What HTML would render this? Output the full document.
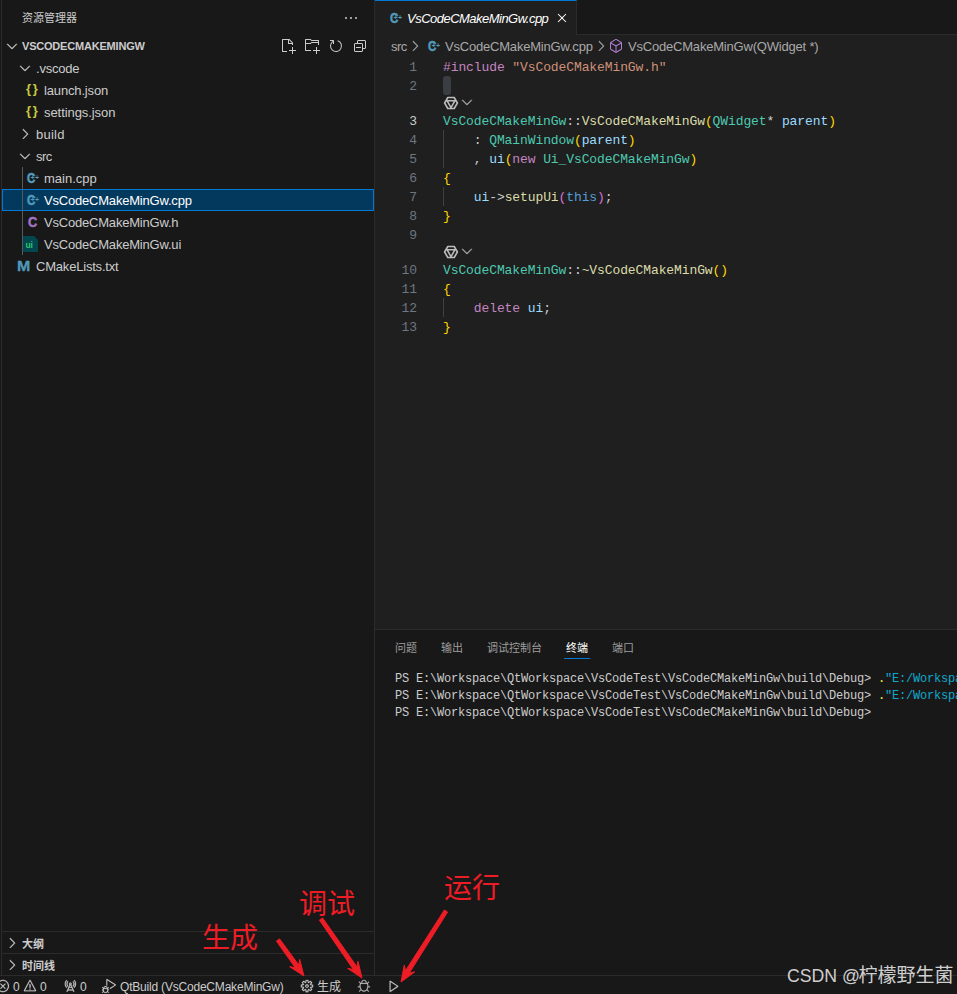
<!DOCTYPE html>
<html lang="zh-CN">
<head>
<meta charset="utf-8">
<title>VsCodeCMakeMinGw.cpp - VsCodeCMakeMinGw - Visual Studio Code</title>
<style>
*{box-sizing:border-box;margin:0;padding:0}
html,body{width:957px;height:994px;overflow:hidden;background:#181818}
body{position:relative;font-family:"Liberation Sans","Noto Sans CJK SC",sans-serif;font-size:13px;color:#cccccc}
.abs{position:absolute}
#sidebar{position:absolute;left:0;top:0;width:375px;height:975px;background:#181818;border-right:1px solid #2b2b2b}
#leftedge{position:absolute;left:1px;top:0;width:1px;height:975px;background:#2b2b2b}
#editor{position:absolute;left:375px;top:0;width:582px;height:629px;background:#1f1f1f}
#panel{position:absolute;left:375px;top:629px;width:582px;height:346px;background:#181818;border-top:1px solid #2b2b2b}
#status{position:absolute;left:0;top:975px;width:957px;height:19px;background:#181818;border-top:1px solid #2b2b2b}
.t{position:absolute;white-space:pre;line-height:22px;height:22px}
.ui{letter-spacing:-0.2px}
.code{position:absolute;left:443px;white-space:pre;font-family:"Liberation Mono",monospace;font-size:13px;line-height:19px;height:19px;letter-spacing:-0.1px;color:#cccccc}
.ln{position:absolute;left:375px;width:42px;text-align:right;font-family:"Liberation Mono",monospace;font-size:13px;line-height:19px;height:19px;letter-spacing:-0.1px;color:#6e7681}
.term{position:absolute;left:395px;white-space:pre;font-family:"Liberation Mono",monospace;font-size:12px;line-height:17px;height:17px;letter-spacing:-0.2px;color:#cccccc}
.k{color:#c586c0}.s{color:#ce9178}.ty{color:#4ec9b0}.fn{color:#dcdcaa}.v{color:#9cdcfe}.b1{color:#ffd700}.b2{color:#da70d6}.kw{color:#569cd6}
svg{position:absolute;overflow:visible}
.red{position:absolute;color:#ee1c25;font-family:"Liberation Sans","Noto Sans CJK SC",sans-serif;font-size:28px;line-height:30px;white-space:pre}
.fi{position:absolute;white-space:pre;font-weight:bold;line-height:22px;height:22px;text-align:center}
</style>
</head>
<body>
<div id="sidebar"></div>
<div id="leftedge"></div>
<div id="editor"></div>
<div id="panel"></div>
<div id="status"></div>

<div class="t" style="left:22px;top:7px;font-size:11px;color:#cccccc">资源管理器</div>
<svg style="left:343px;top:10px" width="16" height="16" viewBox="0 0 16 16" fill="#cccccc"><path d="M4 8a1 1 0 1 1-2 0 1 1 0 0 1 2 0zm5 0a1 1 0 1 1-2 0 1 1 0 0 1 2 0zm5 0a1 1 0 1 1-2 0 1 1 0 0 1 2 0z"/></svg>
<svg style="left:4px;top:38px" width="16" height="16" viewBox="0 0 16 16" fill="#cccccc" stroke="#cccccc" stroke-width="0.35"><path fill-rule="evenodd" d="M7.976 10.072l4.357-4.357.62.618L8.284 11h-.618L3 6.333l.619-.618 4.357 4.357z"/></svg>
<div class="t ui" style="left:22px;top:35px;font-size:11px;font-weight:bold;color:#cccccc">VSCODECMAKEMINGW</div>
<svg style="left:280px;top:38px" width="16" height="16" viewBox="0 0 16 16" fill="#cccccc"><path fill-rule="evenodd" d="M9.5 1.1l3.4 3.5.1.4v2h-1V6H8V2H3v11h4v1H2.5l-.5-.5v-12l.5-.5h6.7l.3.1zM9 2v3h2.9L9 2zm4 14h-1v-3H9v-1h3V9h1v3h3v1h-3v3z"/></svg>
<svg style="left:304px;top:38px" width="16" height="16" viewBox="0 0 16 16" fill="#cccccc"><path fill-rule="evenodd" d="M14.5 2H7.71l-.85-.85L6.51 1h-5l-.5.5v11l.5.5H7v-1H1.99V6h4.49l.35-.15.86-.86H14v1.5l-.001.51h1.011V2.5L14.5 2zm-.51 2h-6.5l-.35.15-.86.86H2v-3h4.29l.85.85.36.15H14l-.01.99zM13 16h-1v-3H9v-1h3V9h1v3h3v1h-3v3z"/></svg>
<svg style="left:328px;top:38px" width="16" height="16" viewBox="0 0 16 16" fill="#cccccc"><path fill-rule="evenodd" d="M4.681 3H2V2h3.5l.5.5V6H5V4a5 5 0 1 0 4.53-.761l.302-.954A6 6 0 1 1 4.681 3z"/></svg>
<svg style="left:352px;top:38px" width="16" height="16" viewBox="0 0 16 16" fill="#cccccc"><path d="M9 9H4v1h5V9z"/><path fill-rule="evenodd" d="M5 3l1-1h7l1 1v7l-1 1h-2v2l-1 1H3l-1-1V6l1-1h2V3zm1 2h4l1 1v4h2V3H6v2zm4 1H3v7h7V6z"/></svg>
<div class="abs" style="left:2px;top:189px;width:372px;height:22px;background:#04395e;border:1px solid #0078d4"></div>
<div class="abs" style="left:22px;top:167px;width:1px;height:88px;background:#585858"></div>
<svg style="left:17px;top:60px" width="16" height="16" viewBox="0 0 16 16" fill="#cccccc" stroke="#cccccc" stroke-width="0.35"><path fill-rule="evenodd" d="M7.976 10.072l4.357-4.357.62.618L8.284 11h-.618L3 6.333l.619-.618 4.357 4.357z"/></svg>
<div class="t" style="left:36px;top:58px;letter-spacing:-0.2px;color:#cccccc">.vscode</div>
<div class="fi" style="left:26px;top:78px;font-size:13px;letter-spacing:1.8px;color:#cbcb41">{}</div>
<div class="t" style="left:44px;top:80px;letter-spacing:-0.15px;color:#cccccc">launch.json</div>
<div class="fi" style="left:26px;top:100px;font-size:13px;letter-spacing:1.8px;color:#cbcb41">{}</div>
<div class="t" style="left:44px;top:102px;letter-spacing:-0.07px;color:#cccccc">settings.json</div>
<svg style="left:16.5px;top:126px" width="16" height="16" viewBox="0 0 16 16" fill="#cccccc" stroke="#cccccc" stroke-width="0.35"><path fill-rule="evenodd" d="M10.072 8.024L5.715 3.667l.618-.62L11 7.716v.618L6.333 13l-.618-.619 4.357-4.357z"/></svg>
<div class="t" style="left:36px;top:124px;letter-spacing:0.24px;color:#cccccc">build</div>
<svg style="left:17px;top:148px" width="16" height="16" viewBox="0 0 16 16" fill="#cccccc" stroke="#cccccc" stroke-width="0.35"><path fill-rule="evenodd" d="M7.976 10.072l4.357-4.357.62.618L8.284 11h-.618L3 6.333l.619-.618 4.357 4.357z"/></svg>
<div class="t" style="left:36px;top:146px;letter-spacing:-0.5px;color:#cccccc">src</div>
<div class="fi" style="left:27px;top:167px;width:10px;font-size:14.5px;color:#519aba;-webkit-text-stroke:0.5px #519aba;transform:scaleX(0.8);transform-origin:0 50%">C</div><div class="fi" style="left:30.4px;top:167.3px;font-size:7px;letter-spacing:0.6px;color:#519aba">++</div>
<div class="t" style="left:44px;top:168px;letter-spacing:-0.01px;color:#cccccc">main.cpp</div>
<div class="fi" style="left:27px;top:189px;width:10px;font-size:14.5px;color:#519aba;-webkit-text-stroke:0.5px #519aba;transform:scaleX(0.8);transform-origin:0 50%">C</div><div class="fi" style="left:30.4px;top:189.3px;font-size:7px;letter-spacing:0.6px;color:#519aba">++</div>
<div class="t" style="left:44px;top:190px;letter-spacing:-0.2px;color:#ffffff">VsCodeCMakeMinGw.cpp</div>
<div class="fi" style="left:27.5px;top:211px;font-size:14.5px;color:#a074c4;-webkit-text-stroke:0.5px #a074c4;transform:scaleX(0.88);transform-origin:0 50%">C</div>
<div class="t" style="left:44px;top:212px;letter-spacing:-0.2px;color:#cccccc">VsCodeCMakeMinGw.h</div>
<svg style="left:23px;top:236px" width="15" height="16" viewBox="0 0 15 16"><path d="M0 0H11L15 4V16H0Z" fill="#00474f"/></svg><div class="fi" style="left:25.4px;top:233.5px;font-size:8.5px;color:#33c46f">ui</div>
<div class="t" style="left:44px;top:234px;letter-spacing:-0.2px;color:#cccccc">VsCodeCMakeMinGw.ui</div>
<div class="fi" style="left:17.4px;top:255px;font-size:14.5px;color:#519aba;-webkit-text-stroke:0.3px #519aba;transform:scaleX(1.1);transform-origin:0 50%">M</div>
<div class="t" style="left:36px;top:256px;letter-spacing:-0.2px;color:#cccccc">CMakeLists.txt</div>
<div class="abs" style="left:2px;top:931px;width:372px;height:1px;background:#2b2b2b"></div>
<div class="abs" style="left:2px;top:953px;width:372px;height:1px;background:#2b2b2b"></div>
<svg style="left:4.4px;top:935px" width="16" height="16" viewBox="0 0 16 16" fill="#cccccc" stroke="#cccccc" stroke-width="0.35"><path fill-rule="evenodd" d="M10.072 8.024L5.715 3.667l.618-.62L11 7.716v.618L6.333 13l-.618-.619 4.357-4.357z"/></svg>
<svg style="left:4.4px;top:957px" width="16" height="16" viewBox="0 0 16 16" fill="#cccccc" stroke="#cccccc" stroke-width="0.35"><path fill-rule="evenodd" d="M10.072 8.024L5.715 3.667l.618-.62L11 7.716v.618L6.333 13l-.618-.619 4.357-4.357z"/></svg>
<div class="t" style="left:22px;top:933px;font-size:11px;font-weight:bold">大纲</div>
<div class="t" style="left:22px;top:955px;font-size:11px;font-weight:bold">时间线</div>
<div class="abs" style="left:375px;top:0;width:582px;height:35px;background:#181818;border-bottom:1px solid #2b2b2b"></div>
<div class="abs" style="left:375px;top:0;width:202px;height:35px;background:#1f1f1f;border-top:1px solid #0078d4;border-right:1px solid #2b2b2b"></div>
<div class="fi" style="left:390px;top:6.5px;width:10px;font-size:14.5px;color:#519aba;-webkit-text-stroke:0.5px #519aba;transform:scaleX(0.8);transform-origin:0 50%">C</div><div class="fi" style="left:393.4px;top:6.8px;font-size:7px;letter-spacing:0.6px;color:#519aba">++</div>
<div class="t" style="left:407px;top:8px;font-style:italic;letter-spacing:-0.52px;color:#ffffff">VsCodeCMakeMinGw.cpp</div>
<svg style="left:554px;top:10px" width="16" height="16" viewBox="0 0 16 16" fill="#ffffff"><path fill-rule="evenodd" d="M8 8.707l3.646 3.647.708-.707L8.707 8l3.647-3.646-.707-.708L8 7.293 4.354 3.646l-.707.708L7.293 8l-3.646 3.646.707.708L8 8.707z"/></svg>
<div class="t" style="left:391px;top:36px;letter-spacing:-0.5px;color:#a9a9a9">src</div>
<svg style="left:406.5px;top:38px" width="16" height="16" viewBox="0 0 16 16" fill="#a9a9a9" stroke="#a9a9a9" stroke-width="0.35"><path fill-rule="evenodd" d="M10.072 8.024L5.715 3.667l.618-.62L11 7.716v.618L6.333 13l-.618-.619 4.357-4.357z"/></svg>
<div class="fi" style="left:428px;top:35px;width:10px;font-size:14.5px;color:#519aba;-webkit-text-stroke:0.5px #519aba;transform:scaleX(0.8);transform-origin:0 50%">C</div><div class="fi" style="left:431.4px;top:35.3px;font-size:7px;letter-spacing:0.6px;color:#519aba">++</div>
<div class="t ui" style="left:445px;top:36px;color:#a9a9a9">VsCodeCMakeMinGw.cpp</div>
<svg style="left:592.8px;top:38px" width="16" height="16" viewBox="0 0 16 16" fill="#a9a9a9" stroke="#a9a9a9" stroke-width="0.35"><path fill-rule="evenodd" d="M10.072 8.024L5.715 3.667l.618-.62L11 7.716v.618L6.333 13l-.618-.619 4.357-4.357z"/></svg>
<svg style="left:608.3px;top:38px" width="16" height="16" viewBox="0 0 16 16" fill="#b180d7"><path d="M13.51 4l-5-3h-1l-5 3-.49.86v6l.49.85 5 3h1l5-3 .49-.85v-6L13.51 4zm-6 9.56l-4.5-2.7V5.7l4.5 2.45v5.41zM3.27 4.7l4.74-2.84 4.74 2.84-4.74 2.59L3.27 4.7zm9.74 6.16l-4.5 2.7V8.15l4.5-2.45v5.16z"/></svg>
<div class="t ui" style="left:628px;top:36px;color:#a9a9a9">VsCodeCMakeMinGw(QWidget *)</div>
<div class="ln" style="top:58px">1</div>
<div class="code" style="top:58px"><span class="k">#include</span> <span class="s">"VsCodeCMakeMinGw.h"</span></div>
<div class="ln" style="top:77px">2</div>
<div class="ln" style="top:112px;color:#cccccc">3</div>
<div class="code" style="top:112px"><span class="ty">VsCodeCMakeMinGw</span>::<span class="fn">VsCodeCMakeMinGw</span><span class="b1">(</span><span class="ty">QWidget</span>* <span class="v">parent</span><span class="b1">)</span></div>
<div class="ln" style="top:131px">4</div>
<div class="code" style="top:131px">    : <span class="ty">QMainWindow</span><span class="b1">(</span><span class="v">parent</span><span class="b1">)</span></div>
<div class="ln" style="top:150px">5</div>
<div class="code" style="top:150px">    , <span class="v">ui</span><span class="b1">(</span><span class="k">new</span> <span class="ty">Ui_VsCodeCMakeMinGw</span><span class="b1">)</span></div>
<div class="ln" style="top:169px">6</div>
<div class="code" style="top:169px"><span class="b1">{</span></div>
<div class="ln" style="top:188px">7</div>
<div class="code" style="top:188px">    <span class="v">ui</span>-&gt;<span class="fn">setupUi</span><span class="b2">(</span><span class="kw">this</span><span class="b2">)</span>;</div>
<div class="ln" style="top:207px">8</div>
<div class="code" style="top:207px"><span class="b1">}</span></div>
<div class="ln" style="top:226px">9</div>
<div class="ln" style="top:261px">10</div>
<div class="code" style="top:261px"><span class="ty">VsCodeCMakeMinGw</span>::<span class="fn">~VsCodeCMakeMinGw</span><span class="b1">()</span></div>
<div class="ln" style="top:280px">11</div>
<div class="code" style="top:280px"><span class="b1">{</span></div>
<div class="ln" style="top:299px">12</div>
<div class="code" style="top:299px">    <span class="k">delete</span> <span class="v">ui</span>;</div>
<div class="ln" style="top:318px">13</div>
<div class="code" style="top:318px"><span class="b1">}</span></div>
<div class="abs" style="left:443px;top:76px;width:8px;height:19px;background:#3a3d41;border-radius:3px"></div>
<div class="abs" style="left:443px;top:130px;width:1px;height:38px;background:#404040"></div>
<div class="abs" style="left:443px;top:187px;width:1px;height:19px;background:#404040"></div>
<div class="abs" style="left:443px;top:298px;width:1px;height:19px;background:#404040"></div>
<svg style="left:444.3px;top:96px" width="14" height="14" viewBox="0 0 14 14" fill="none" stroke="#bdbdbd" stroke-width="1.55" stroke-linejoin="round" stroke-linecap="round"><path d="M13.4 7.0 L10.2 12.5 L3.8 12.5 L0.6 7.0 L3.8 1.5 L10.2 1.5Z M3.0 4.7 L12.2 4.7 M11.0 4.7 L6.4 12.7 M7.0 11.6 L2.4 3.6"/></svg>
<svg style="left:458.6px;top:94px" width="16" height="16" viewBox="0 0 16 16" fill="#b0b0b0" stroke="#b0b0b0" stroke-width="0.35"><path fill-rule="evenodd" d="M7.976 10.072l4.357-4.357.62.618L8.284 11h-.618L3 6.333l.619-.618 4.357 4.357z"/></svg>
<svg style="left:444.3px;top:245px" width="14" height="14" viewBox="0 0 14 14" fill="none" stroke="#bdbdbd" stroke-width="1.55" stroke-linejoin="round" stroke-linecap="round"><path d="M13.4 7.0 L10.2 12.5 L3.8 12.5 L0.6 7.0 L3.8 1.5 L10.2 1.5Z M3.0 4.7 L12.2 4.7 M11.0 4.7 L6.4 12.7 M7.0 11.6 L2.4 3.6"/></svg>
<svg style="left:458.6px;top:243px" width="16" height="16" viewBox="0 0 16 16" fill="#b0b0b0" stroke="#b0b0b0" stroke-width="0.35"><path fill-rule="evenodd" d="M7.976 10.072l4.357-4.357.62.618L8.284 11h-.618L3 6.333l.619-.618 4.357 4.357z"/></svg>
<div class="t" style="left:395px;top:637px;font-size:11px;color:#9d9d9d">问题</div>
<div class="t" style="left:441px;top:637px;font-size:11px;color:#9d9d9d">输出</div>
<div class="t" style="left:487px;top:637px;font-size:11px;color:#9d9d9d">调试控制台</div>
<div class="t" style="left:566px;top:637px;font-size:11px;color:#ffffff">终端</div>
<div class="t" style="left:612px;top:637px;font-size:11px;color:#9d9d9d">端口</div>
<div class="abs" style="left:564px;top:658px;width:26px;height:1px;background:#0078d4"></div>
<div class="term" style="top:671px">PS E:\Workspace\QtWorkspace\VsCodeTest\VsCodeCMakeMinGw\build\Debug&gt; <span style="color:#f5f543">.</span><span style="color:#11a8cd">"E:/Workspace/QtWorkspace/VsCodeTest/VsCodeCMakeMinGw/build/Debug/VsCodeCMakeMinGw.exe"</span></div>
<div class="term" style="top:688px">PS E:\Workspace\QtWorkspace\VsCodeTest\VsCodeCMakeMinGw\build\Debug&gt; <span style="color:#f5f543">.</span><span style="color:#11a8cd">"E:/Workspace/QtWorkspace/VsCodeTest/VsCodeCMakeMinGw/build/Debug/VsCodeCMakeMinGw.exe"</span></div>
<div class="term" style="top:705px">PS E:\Workspace\QtWorkspace\VsCodeTest\VsCodeCMakeMinGw\build\Debug&gt;</div>
<svg style="left:-4px;top:978.7px" width="14" height="14" viewBox="0 0 16 16" fill="#cccccc" stroke="#cccccc" stroke-width="0.25"><path fill-rule="evenodd" d="M8.6 1c1.6.1 3.1.9 4.2 2 1.3 1.4 2 3.1 2 5.1 0 1.6-.6 3.1-1.6 4.4-1 1.2-2.4 2.1-4 2.4-1.6.3-3.2.1-4.6-.7-1.4-.8-2.5-2-3.1-3.5C.9 9.2.8 7.5 1.3 6c.5-1.6 1.4-2.9 2.8-3.8C5.4 1.3 7 .9 8.6 1zm.5 12.9c1.3-.3 2.5-1 3.4-2.1.8-1.1 1.3-2.4 1.2-3.8 0-1.6-.6-3.2-1.7-4.3-1-1-2.2-1.6-3.6-1.7-1.3-.1-2.7.2-3.8 1-1.1.8-1.9 1.9-2.3 3.3-.4 1.3-.4 2.7.2 4 .6 1.3 1.5 2.3 2.7 3 1.2.7 2.6.9 3.9.6zM7.9 7.5L10.3 5l.7.7-2.4 2.5 2.4 2.5-.7.7-2.4-2.5-2.4 2.5-.7-.7 2.4-2.5-2.4-2.5.7-.7 2.4 2.5z"/></svg>
<div class="t ui" style="left:13px;top:976px;font-size:12px">0</div>
<svg style="left:23px;top:978.7px" width="14" height="14" viewBox="0 0 16 16" fill="#cccccc" stroke="#cccccc" stroke-width="0.25"><path fill-rule="evenodd" d="M7.56 1h.88l6.54 12.26-.44.74H1.44L1 13.26 7.56 1zM8 2.28L2.28 13H13.7L8 2.28zM8.625 12v-1h-1.25v1h1.25zm-1.25-2V6h1.25v4h-1.25z"/></svg>
<div class="t ui" style="left:40px;top:976px;font-size:12px">0</div>
<svg style="left:63px;top:978.7px" width="14" height="14" viewBox="0 0 16 16" fill="#cccccc" stroke="#cccccc" stroke-width="0.25"><path fill-rule="evenodd" d="M2.998 5.58a5.55 5.55 0 0 1 1.62-3.88l-.71-.7a6.45 6.45 0 0 0 0 9.16l.71-.7a5.55 5.55 0 0 1-1.62-3.88zm1.06 0a4.42 4.42 0 0 0 1.32 3.17l.71-.71a3.27 3.27 0 0 1-.76-1.12 3.45 3.45 0 0 1 0-2.67 3.22 3.22 0 0 1 .76-1.13l-.71-.71a4.46 4.46 0 0 0-1.32 3.17zm7.65 3.21l-.71-.71c.33-.32.59-.704.76-1.13a3.449 3.449 0 0 0 0-2.67 3.22 3.22 0 0 0-.76-1.13l.71-.7a4.468 4.468 0 0 1 0 6.34zM13.068 1l-.71.71a5.43 5.43 0 0 1 0 7.74l.71.71a6.45 6.45 0 0 0 0-9.16zM9.993 5.43a1.5 1.5 0 0 1-.245.98 2 2 0 0 1-.27.23l3.44 7.73-.92.4-.77-1.73h-5.54l-.77 1.73-.92-.4 3.44-7.73a1.52 1.52 0 0 1-.33-1.63 1.55 1.55 0 0 1 .56-.68 1.5 1.5 0 0 1 2.325 1.1zm-1.595-.34a.52.52 0 0 0-.25.14.52.52 0 0 0-.11.22.48.48 0 0 0 0 .29c.04.09.102.17.18.23a.54.54 0 0 0 .28.08.51.51 0 0 0 .5-.5.54.54 0 0 0-.08-.28.58.58 0 0 0-.23-.18.48.48 0 0 0-.29 0zm.23 2.05h-.27l-.87 1.94h2l-.86-1.94zm2.2 4.94l-.89-2h-2.88l-.89 2h4.66z"/></svg>
<div class="t ui" style="left:80px;top:976px;font-size:12px">0</div>
<svg style="left:102px;top:978.7px" width="14" height="14" viewBox="0 0 24 24" fill="#cccccc" stroke="#cccccc" stroke-width="0.25"><path d="M10.94 13.5l-1.32 1.32a3.73 3.73 0 0 0-7.24 0L1.06 13.5 0 14.56l1.72 1.72-.22.22V18H0v1.5h1.5v.08c.077.489.214.966.41 1.42L0 22.94 1.06 24l1.65-1.65A4.308 4.308 0 0 0 6 24a4.31 4.31 0 0 0 3.29-1.65L10.94 24 12 22.94 10.09 21c.198-.464.336-.951.41-1.45v-.1H12V18h-1.5v-1.5l-.22-.22L12 14.56l-1.06-1.06zM6 13.5a2.25 2.25 0 0 1 2.25 2.25h-4.5A2.25 2.25 0 0 1 6 13.5zm3 6a3.33 3.33 0 0 1-3 3 3.33 3.33 0 0 1-3-3v-2.25h6v2.25zm14.76-9.9v1.26L13.5 17.37V15.6l8.5-5.37L9 2v9.46a5.07 5.07 0 0 0-1.5-.72V.63L8.64 0l15.12 9.6z"/></svg>
<div class="t ui" style="left:120px;top:976px;font-size:12px">QtBuild (VsCodeCMakeMinGw)</div>
<svg style="left:300px;top:978.7px" width="14" height="14" viewBox="0 0 16 16" fill="#cccccc" stroke="#cccccc" stroke-width="0.25"><path fill-rule="evenodd" d="M9.1 4.4L8.6 2H7.4l-.5 2.4-.7.3-2-1.3-.9.8 1.3 2-.2.7-2.4.5v1.2l2.4.5.3.8-1.3 2 .8.8 2-1.3.8.3.4 2.3h1.2l.5-2.4.8-.3 2 1.3.8-.8-1.3-2 .3-.8 2.3-.4V7.4l-2.4-.5-.3-.8 1.3-2-.8-.8-2 1.3-.7-.2zM9.4 1l.5 2.4L12 2.1l2 2-1.4 2.1 2.4.4v2.8l-2.4.5L14 12l-2 2-2.1-1.4-.5 2.4H6.6l-.5-2.4L4 13.9l-2-2 1.4-2.1L1 9.4V6.6l2.4-.5L2.1 4l2-2 2.1 1.4.4-2.4h2.8zm.6 7c0 1.1-.9 2-2 2s-2-.9-2-2 .9-2 2-2 2 .9 2 2zM8 9c.6 0 1-.4 1-1s-.4-1-1-1-1 .4-1 1 .4 1 1 1z"/></svg>
<div class="t" style="left:317px;top:976px;font-size:12px">生成</div>
<svg style="left:357px;top:978.7px" width="14" height="14" viewBox="0 0 16 16" fill="#cccccc" stroke="#cccccc" stroke-width="0.25"><path fill-rule="evenodd" d="M10.877 4.5v-.582a2.918 2.918 0 1 0-5.836 0V4.5h-.833L2.545 2.829l-.593.59 1.611 1.619-.019.049a8.03 8.03 0 0 0-.503 2.831c0 .196.007.39.02.58l.003.045H1v.836h2.169l.006.034c.172.941.504 1.802.954 2.531l.034.055L2.2 13.962l.592.592 1.871-1.872.058.066c.868.992 2.002 1.589 3.238 1.589 1.218 0 2.336-.579 3.199-1.544l.057-.064 1.91 1.92.593-.591-1.996-2.006.035-.056c.467-.74.81-1.619.986-2.583l.006-.034h2.171v-.836h-2.065l.003-.044a8.43 8.43 0 0 0 .02-.58 8.02 8.02 0 0 0-.517-2.866l-.019-.05 1.57-1.57-.592-.59L11.662 4.5h-.785zm-5 0v-.582a2.082 2.082 0 1 1 4.164 0V4.5H5.877zm5.697.836H4.344l-.014.036a7.2 7.2 0 0 0-.453 2.546c0 3.176 1.91 5.582 4.082 5.582 2.171 0 4.082-2.406 4.082-5.582a7.2 7.2 0 0 0-.453-2.546l-.014-.036z"/></svg>
<svg style="left:387px;top:978.7px" width="14" height="14" viewBox="0 0 16 16" fill="#cccccc" stroke="#cccccc" stroke-width="0.25"><path d="M3.78 2L3 2.41v12l.78.42 9-6V8l-9-6zM4 13.48V3.35l7.6 5.07L4 13.48z"/></svg>
<div class="red" style="left:202px;top:924px">生成</div>
<div class="red" style="left:299px;top:890px">调试</div>
<div class="red" style="left:444px;top:874px">运行</div>
<svg style="left:0;top:0" width="957" height="994" viewBox="0 0 957 994"><path d="M276.4 941.1 L295.2 967.6 L289.6 966.7 L304.0 976.0 L299.7 959.4 L298.8 965.0 L279.6 938.9Z" fill="#ee1c25" stroke="#ee1c25" stroke-width="1" stroke-linejoin="round"/><path d="M319.4 920.1 L353.3 969.4 L347.7 968.4 L362.0 978.0 L358.0 961.3 L357.0 966.9 L322.6 917.9Z" fill="#ee1c25" stroke="#ee1c25" stroke-width="1" stroke-linejoin="round"/><path d="M444.4 910.0 L405.5 970.7 L404.3 965.1 L401.0 982.0 L414.8 971.8 L409.3 973.1 L447.6 912.0Z" fill="#ee1c25" stroke="#ee1c25" stroke-width="1" stroke-linejoin="round"/></svg>
<div class="t" style="left:787px;top:961px;line-height:30px;height:30px;font-size:17.7px;color:#cfcfcf">CSDN @<span style="font-size:19px;margin-left:-1.5px">柠檬野生菌</span></div>
</body>
</html>
